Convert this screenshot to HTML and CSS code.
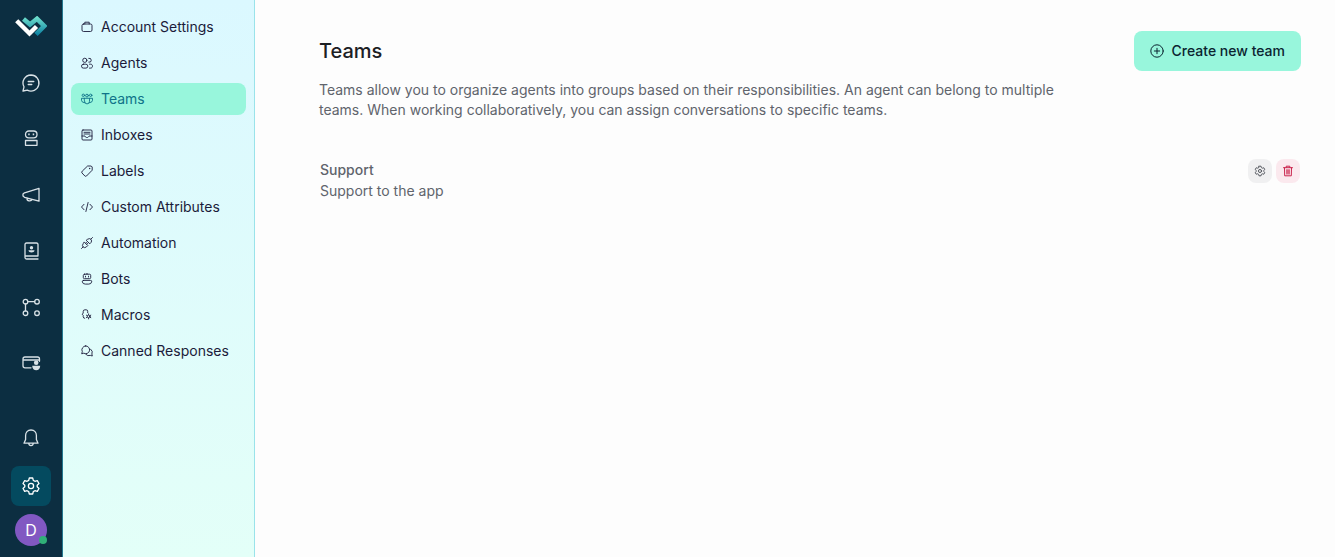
FILE: index.html
```html
<!DOCTYPE html>
<html lang="en">
<head>
    <meta charset="utf-8">
    <meta name="viewport" content="width=device-width, initial-scale=1">
    <title>Teams</title>
    <link rel="stylesheet" href="styles.css">
</head>
<body>
    <nav class="rail" aria-label="Main">
        <a class="logo" href="#" aria-label="Home">
            <svg width="32" height="22" viewBox="0 0 32 22">
                <defs>
                    <linearGradient id="logo-teal" gradientUnits="userSpaceOnUse" x1="0" y1="1" x2="0" y2="20">
                        <stop offset="0" stop-color="#6fe0cd"/>
                        <stop offset="1" stop-color="#067b9f"/>
                    </linearGradient>
                </defs>
                <path class="logo-back" d="M8.500 3 15 8.500 22 2.800 29.300 10 21 18.300" stroke="url(#logo-teal)"/>
                <path class="logo-front" d="M1.700 4.700 14.500 17.500 21.500 10.500"/>
            </svg>
        </a>
        <a class="rail-item" href="#" aria-label="Conversations">
            <svg class="icon-lg" viewBox="0 0 20 20"><path d="M10 2a8 8 0 1 1-3.700 15.100L2 18l1-4.200A8 8 0 0 1 10 2zM7.200 8.500h5.600M7.200 11.500h3.600"/></svg>
        </a>
        <a class="rail-item" href="#" aria-label="Captain">
            <svg class="icon-lg" viewBox="0 0 20 20"><rect x="4.500" y="2" width="11.500" height="6.800" rx="3.400"/><path d="M4.500 11.500H16v4.800H4.500z"/><path class="solid" d="M7.200 4.600h1.500v1.700H7.200zM11.700 4.600h1.500v1.700h-1.500z"/></svg>
        </a>
        <a class="rail-item" href="#" aria-label="Campaigns">
            <svg class="icon-lg" viewBox="0 0 20 20"><path d="M18 3.300v12.900L3.500 12.300 2 11V9l1.500-1.200zM6 13c-.4 3.500 4.300 3.600 5 1.300"/></svg>
        </a>
        <a class="rail-item" href="#" aria-label="Contacts">
            <svg class="icon-lg" viewBox="0 0 20 20"><path d="M17 14.700V3.500Q17 2 15.500 2h-10Q4 2 4 3.500v13Q4 18 5.500 18H17M4 15h13"/><circle class="solid" cx="10.500" cy="6.800" r="1.700"/><path class="solid" d="M7.500 9.300h6c0 3-6 3-6 0z"/></svg>
        </a>
        <a class="rail-item" href="#" aria-label="Flows">
            <svg class="icon-lg" viewBox="0 0 20 20"><circle cx="4.500" cy="4.700" r="2.300"/><circle cx="16" cy="4.700" r="2.300"/><circle cx="4.500" cy="16.200" r="2.300"/><circle cx="16" cy="16.200" r="2.300"/><path d="M6.800 4.700h6.900M4.500 7v6.900"/></svg>
        </a>
        <a class="rail-item" href="#" aria-label="Billing">
            <svg class="icon-lg" viewBox="0 0 20 20"><path d="M10 14.800H4q-2 0-2-2V6q0-2 2-2h12.500q2 0 2 2v2.300M2 7h16.500"/><circle class="solid" cx="15.200" cy="9.700" r="2.300"/><path class="solid" d="M11.200 12.700h8c0 6-8 6-8 0z"/></svg>
        </a>
        <div class="rail-bottom">
            <a class="rail-item" href="#" aria-label="Notifications">
                <svg class="icon-lg" viewBox="0 0 20 20"><path d="M10 2C6.500 2 4.600 4.500 4.600 7.600v3.900L3 15.200h14l-1.600-3.700V7.600C15.400 4.500 13.500 2 10 2zM7.700 15.300c.3 3 4.300 3 4.600 0"/></svg>
            </a>
            <a class="rail-item active" href="#" aria-label="Settings">
                <svg class="icon-lg" viewBox="0 0 20 20"><use href="#gear"/></svg>
            </a>
            <button class="avatar" type="button" aria-label="Profile">D<span class="status"></span></button>
        </div>
    </nav>

    <nav class="sidebar" aria-label="Settings">
        <a href="#"><svg class="icon" viewBox="0 0 12 12"><rect x="1" y="3" width="10" height="7.500" rx="1.500"/><path d="M3.800 3V1.200h4.400V3"/></svg>Account Settings</a>
        <a href="#"><svg class="icon" viewBox="0 0 12 12"><circle cx="3.800" cy="3.300" r="2.100"/><path d="M7.800 1.300a2 2 0 1 1 0 3.900"/><rect x=".5" y="7.200" width="6.300" height="3.900" rx="1.900"/><path d="M8.500 7.200h1.200c2.400 0 2.400 3.900 0 3.900H8.500"/></svg>Agents</a>
        <a class="active" href="#" aria-current="page"><svg class="icon" viewBox="0 0 12 12"><circle cx="2.300" cy="2.300" r="1.200"/><circle cx="6" cy="2.600" r="1.400"/><circle cx="9.700" cy="2.300" r="1.200"/><path d="M3.500 5.300h5v3q0 2.600-2.500 2.600T3.500 8.300zM3.500 5.300h-3v2q0 2.300 3.300 2.500M8.500 5.300h3v2q0 2.300-3.300 2.500"/></svg>Teams</a>
        <a href="#"><svg class="icon" viewBox="0 0 12 12"><rect x="1" y="1" width="10" height="10" rx="1"/><path d="M3 3.300h6M3 5h6M1 7h3c.5 2 3.500 2 4 0h3"/></svg>Inboxes</a>
        <a href="#"><svg class="icon" viewBox="0 0 12 12"><path d="M7 1h3.200l1 1v3.200L5.500 11q-.8.700-1.600 0L1 8q-.8-.8 0-1.600z"/><circle class="solid" cx="8.700" cy="3.500" r=".7"/></svg>Labels</a>
        <a href="#"><svg class="icon" viewBox="0 0 12 12"><path d="M3 3.300.5 6 3 8.700M9 3.300 11.500 6 9 8.700M7.100 1.500 4.900 10.500"/></svg>Custom Attributes</a>
        <a href="#"><svg class="icon" viewBox="0 0 12 12"><path d="M.5 11.500 2 10M10 2 11.500.5M3.500 5.200l3.300 3.300-1.500 1.500q-1.700 1.300-3.200 0t0-3.300zM5.500 3.500l3.300 3.300L10 5.500q1.200-1.600 0-3.100T7 2zM4.600 6.300l1-1M5.700 7.400l1-1"/></svg>Automation</a>
        <a href="#"><svg class="icon" viewBox="0 0 12 12"><rect x="2.300" y="1.200" width="7.400" height="4.500" rx="1.200"/><path d="M4.500 3.200v.8M7.500 3.200v.8M2.600 7.400h6.800q1.600 0 1.300 1.400-.4 2.300-3 2.300H4.300q-2.600 0-3-2.300-.3-1.400 1.300-1.400zM6 .3v.9"/></svg>Bots</a>
        <a href="#"><svg class="icon" viewBox="0 0 12 12"><path d="M3.700 9.300q-1.500 0-1.500-1.500V6.300L1.200 5.200l1-1.100V2.500Q2.200.8 3.900.8h1.300q1.500 0 1.500 1.500v1.400"/><circle cx="7.600" cy="7.400" r="1.300"/><path d="M7.600 4.900v.7M7.600 9.200v.7M5.400 6.200l.6.300M9.200 8.300l.6.300M5.400 8.600l.6-.3M9.200 6.500l.6-.3"/></svg>Macros</a>
        <a href="#"><svg class="icon" viewBox="0 0 12 12"><path d="M4.700.9a3.900 3.900 0 1 1-1.900 7.300L.7 8.800l.6-2.200A3.900 3.900 0 0 1 4.700.9zM4.800 9.300q1.900 2.200 4.500 1.100l2 .6-.4-1.900q1.400-2.900-1.300-5"/></svg>Canned Responses</a>
    </nav>

    <main class="content">
        <header class="page-header">
            <div class="title-row">
                <h1>Teams</h1>
                <button class="create" type="button">
                    <svg viewBox="0 0 14 14"><circle cx="7" cy="7" r="6.200"/><path d="M7 4.300v5.400M4.300 7h5.400"/></svg>
                    Create new team
                </button>
            </div>
            <p>Teams allow you to organize agents into groups based on their responsibilities. An agent can belong to multiple teams. When working collaboratively, you can assign conversations to specific teams.</p>
        </header>
        <table class="teams">
            <tbody>
                <tr>
                    <td>
                        <span class="team-name">Support</span>
                        <span class="team-text">Support to the app</span>
                    </td>
                    <td class="actions">
                        <div class="buttons">
                            <button class="action" type="button" aria-label="Edit team">
                                <svg viewBox="0 0 20 20"><use href="#gear"/></svg>
                            </button>
                            <button class="action delete" type="button" aria-label="Delete team">
                                <svg viewBox="0 0 12 12"><path class="tint" d="M4 4h4v6H4z"/><path d="M1.500 2.700h9M4.200 2.500V1.200h3.600v1.300M2.500 2.800l.2 8h6.600l.2-8M5 5v3.500M7 5v3.500"/></svg>
                            </button>
                        </div>
                    </td>
                </tr>
            </tbody>
        </table>
    </main>

    <svg class="sprite" width="0" height="0" aria-hidden="true">
        <symbol id="gear" viewBox="0 0 20 20">
            <path d="M8.300 2h3.400l.6 2.400 1.600.9 2.400-.7L18 7.500l-1.800 1.700v1.600l1.800 1.700-1.700 2.900-2.400-.7-1.600.9-.6 2.400H8.300l-.6-2.400-1.600-.9-2.400.7L2 12.500l1.800-1.700V9.200L2 7.500l1.700-2.900 2.400.7 1.600-.9z"/>
            <circle cx="10" cy="10" r="2.600"/>
        </symbol>
    </svg>
</body>
</html>
```
FILE: styles.css
```css
:root {
    --rail-bg: #0c2e41;
    --rail-active: #044a5f;
    --accent: #98f6dc;
    --text: #1c2024;
    --text-muted: #60646c;
}

* {
    box-sizing: border-box;
}

body {
    display: flex;
    min-height: 100vh;
    margin: 0;
    font-family: Inter, sans-serif;
    font-size: 14px;
    line-height: 20px;
    color: var(--text);
    background: #fdfdfd;
}

a {
    color: inherit;
    text-decoration: none;
}

button {
    border: 0;
    padding: 0;
    font: inherit;
    cursor: pointer;
}

svg {
    display: block;
    flex-shrink: 0;
    fill: none;
    stroke: currentColor;
    stroke-linejoin: round;
    stroke-linecap: round;
}

.solid {
    fill: currentColor;
    stroke: none;
}

.sprite {
    position: absolute;
}

/* Icon rail */
.rail {
    display: flex;
    flex-direction: column;
    align-items: center;
    gap: 16px;
    flex-shrink: 0;
    width: 63px;
    padding: 16px 0 11px;
    background: var(--rail-bg);
    border-right: 1px solid #23788f;
    color: #d9e2e7;
}

.logo {
    margin-bottom: 9px;
}

.logo svg {
    stroke-linecap: butt;
    stroke-linejoin: miter;
}

.logo-back {
    stroke-width: 4.6;
}

.logo-front {
    stroke: #fff;
    stroke-width: 4.4;
}

.rail-item {
    display: flex;
    align-items: center;
    justify-content: center;
    width: 40px;
    height: 40px;
    border-radius: 8px;
}

.rail-item.active {
    background: var(--rail-active);
    color: #fff;
}

.icon-lg {
    width: 20px;
    height: 20px;
    stroke-width: 1.3;
}

.rail-bottom {
    display: flex;
    flex-direction: column;
    align-items: center;
    gap: 8px;
    margin-top: auto;
}

.avatar {
    position: relative;
    width: 32px;
    height: 32px;
    border-radius: 50%;
    background: #8158c2;
    color: #fff;
    font-size: 16px;
}

.status {
    position: absolute;
    right: 0;
    bottom: 2px;
    width: 8px;
    height: 8px;
    border-radius: 50%;
    background: #30b077;
}

/* Settings menu */
.sidebar {
    display: flex;
    flex-direction: column;
    gap: 4px;
    flex-shrink: 0;
    width: 192px;
    padding: 11px 8px;
    background: linear-gradient(#dbf8ff, #e3fff8);
    border-right: 1px solid #9ae3ea;
    color: #1b1b3a;
}

.sidebar a {
    display: flex;
    align-items: center;
    gap: 8px;
    height: 32px;
    padding: 0 10px;
    border-radius: 8px;
}

.sidebar a.active {
    background: var(--accent);
    color: #107389;
}

.icon {
    width: 12px;
    height: 12px;
    stroke-width: 0.9;
}

/* Page */
.content {
    flex: 1;
    min-width: 0;
    padding: 31px 34px 31px 64px;
}

.title-row {
    display: flex;
    align-items: center;
    justify-content: space-between;
}

h1 {
    margin: 0;
    font-size: 20px;
    line-height: 28px;
    font-weight: 500;
}

.create {
    display: flex;
    align-items: center;
    gap: 8px;
    height: 40px;
    padding: 0 16px;
    border-radius: 8px;
    background: var(--accent);
    color: #0b2430;
    font-weight: 500;
}

.create svg {
    width: 14px;
    height: 14px;
}

.page-header p {
    max-width: 768px;
    margin: 9px 0 0;
    color: var(--text-muted);
}

.teams {
    width: 100%;
    margin-top: 39px;
    border-collapse: collapse;
    color: var(--text-muted);
}

.teams td {
    padding: 0 1px;
}

.team-name,
.team-text {
    display: block;
    line-height: 21px;
}

.team-name {
    font-weight: 500;
}

.teams .actions {
    vertical-align: top;
}

.buttons {
    display: flex;
    justify-content: flex-end;
    gap: 4px;
}

.action {
    display: flex;
    align-items: center;
    justify-content: center;
    width: 24px;
    height: 24px;
    border-radius: 8px;
    background: #f0f0f1;
    color: #50545b;
}

.action svg {
    width: 12px;
    height: 12px;
    stroke-width: 1;
}

.action:not(.delete) svg {
    stroke-width: 1.6;
}

.action.delete {
    background: #fbe9ee;
    color: #ca244d;
}

.tint {
    fill: #ecabbb;
    stroke: none;
}
```
